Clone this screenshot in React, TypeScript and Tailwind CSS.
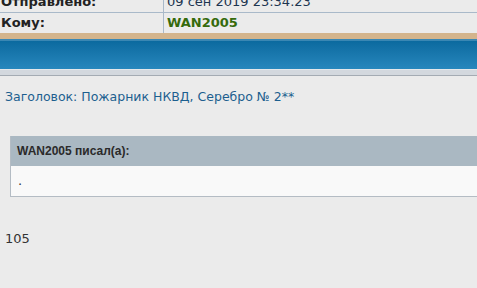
export default function App() {
  const font = { fontFamily: '"DejaVu Sans", Verdana, sans-serif' };
  return (
    <div className="w-[477px] h-[288px] overflow-hidden bg-[#ebebeb]" style={font}>
      {/* header table */}
      <div className="-mt-[8px]">
        <div className="flex h-[21px] border-b border-[#a9b9c9]">
          <div className="w-[164px] border-r border-[#a9b9c9] pl-[1px] text-[13px] font-bold leading-[20px] text-[#222]">
            Отправлено:
          </div>
          <div className="pl-[3px] text-[13px] leading-[20px] text-[#1d3550]">09 сен 2019 23:34.23</div>
        </div>
        <div className="flex h-[20px]">
          <div className="w-[164px] border-r border-[#a9b9c9] pl-[1px] text-[13px] font-bold leading-[20px] text-[#222]">
            Кому:
          </div>
          <div className="pl-[3px] text-[13px] font-bold leading-[20px] text-[#356a0c]">WAN2005</div>
        </div>
      </div>

      {/* decorative bars */}
      <div className="h-[6px] bg-[#d3b48c]" />
      <div className="h-[30px] border-t-2 border-[#3a87b3] bg-gradient-to-b from-[#0b6a9f] to-[#2687bd]" />
      <div className="h-[7px] border-t border-[#e4e7ea] border-b border-b-[#a4abb3] bg-[#d3d8de]" />

      {/* subject */}
      <div className="mt-[13px] pl-[5px] text-[12.5px] leading-[16px] text-[#1c5f8f]">
        Заголовок: Пожарник НКВД, Серебро № 2**
      </div>

      {/* quote */}
      <div className="ml-[10px] mt-[31px] border-b border-l border-[#b4bcc4]">
        <div
          className="h-[30px] bg-[#aab8c2] pl-[6px] text-[12px] font-bold leading-[30px] text-[#2a2a2a]"
          style={{ fontFamily: '"Liberation Sans", Arial, sans-serif' }}
        >
          WAN2005 писал(а):
        </div>
        <div className="h-[30px] bg-[#f9f9f9] pl-[7px] text-[13px] leading-[30px] text-[#333]">.</div>
      </div>

      <div className="mt-[34px] pl-[5px] text-[13px] leading-[16px] text-[#333]">105</div>
    </div>
  );
}
